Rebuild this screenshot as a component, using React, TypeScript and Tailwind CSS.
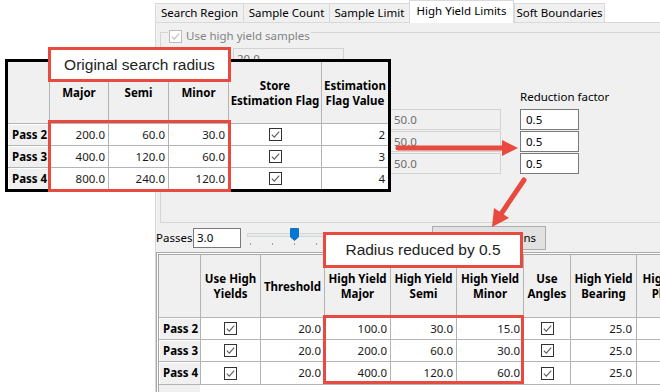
import { Fragment } from "react";

const RED = "#e84a3f";

function Check({ disabled }: { disabled?: boolean }) {
  const c = disabled ? "#bcbcbc" : "#333333";
  return (
    <svg width="13" height="13" viewBox="0 0 13 13" className="shrink-0">
      <rect x="0.5" y="0.5" width="12" height="12" fill="white" stroke={c} />
      <path d="M2.8 6.6 L5.3 9.1 L10.2 3.6" fill="none" stroke={disabled ? "#bcbcbc" : "#5a5a5a"} strokeWidth="1.1" />
    </svg>
  );
}

const tabs = [
  { label: "Search Region", w: "w-[88px]" },
  { label: "Sample Count", w: "w-[86px]" },
  { label: "Sample Limit", w: "w-[80px]" },
  { label: "High Yield Limits", w: "w-[105px]", active: true },
  { label: "Soft Boundaries", w: "w-[91px]" },
];

const passes = ["Pass 2", "Pass 3", "Pass 4"];

const hdr =
  "bg-[#f0f0f0] border-r border-b border-[#b4b4b4] flex items-center justify-center text-center font-bold leading-[15px] whitespace-nowrap overflow-hidden";
const rowHdr =
  "bg-[#f0f0f0] border-r border-b border-[#b4b4b4] flex items-center pl-[4px] font-bold shadow-[inset_1px_1px_0_#ffffff]";
const num = "bg-white border-r border-b border-[#b4b4b4] flex items-center justify-end pr-[3px] text-[#1a1a1a]";
const box = "bg-white border-r border-b border-[#b4b4b4] flex items-center justify-center";

function OriginalTable() {
  const rows = [
    ["200.0", "60.0", "30.0", "2"],
    ["400.0", "120.0", "60.0", "3"],
    ["800.0", "240.0", "120.0", "4"],
  ];
  return (
    <div className="absolute left-[5px] top-[59px] border-[3px] border-black bg-white">
      <div className="grid grid-cols-[42px_59px_60px_60px_93px_66px] grid-rows-[62px_22px_22px_21px]">
        <div className={hdr} />
        <div className={hdr}>Major</div>
        <div className={hdr}>Semi</div>
        <div className={hdr}>Minor</div>
        <div className={hdr}>
          Store
          <br />
          Estimation Flag
        </div>
        <div className={hdr + " border-r-0"}>
          Estimation
          <br />
          Flag Value
        </div>
        {rows.map((r, i) => (
          <Fragment key={i}>
            <div className={rowHdr + (i === 2 ? " border-b-0" : "")}>{passes[i]}</div>
            <div className={num + (i === 2 ? " border-b-0" : "")}>{r[0]}</div>
            <div className={num + (i === 2 ? " border-b-0" : "")}>{r[1]}</div>
            <div className={num + (i === 2 ? " border-b-0" : "")}>{r[2]}</div>
            <div className={box + (i === 2 ? " border-b-0" : "")}>
              <Check />
            </div>
            <div className={num + " border-r-0" + (i === 2 ? " border-b-0" : "")}>{r[3]}</div>
          </Fragment>
        ))}
      </div>
    </div>
  );
}

function HighYieldTable() {
  const rows = [
    ["100.0", "30.0", "15.0"],
    ["200.0", "60.0", "30.0"],
    ["400.0", "120.0", "60.0"],
  ];
  return (
    <div className="mt-[2px] flex-1 flex flex-col border-l border-t border-[#a8a8a8] pl-[1px] pt-[1px] bg-white">
      <div className="flex-1 flex flex-col border-l border-t border-[#a8a8a8]">
        <div className="grid w-max grid-cols-[42px_60px_64px_66px_66px_67px_47px_66px_70px] grid-rows-[63px_22px_22px_23px]">
          <div className={hdr} />
          <div className={hdr}>
            Use High
            <br />
            Yields
          </div>
          <div className={hdr}>Threshold</div>
          <div className={hdr}>
            High Yield
            <br />
            Major
          </div>
          <div className={hdr}>
            High Yield
            <br />
            Semi
          </div>
          <div className={hdr}>
            High Yield
            <br />
            Minor
          </div>
          <div className={hdr}>
            Use
            <br />
            Angles
          </div>
          <div className={hdr}>
            High Yield
            <br />
            Bearing
          </div>
          <div className={hdr}>
            High Yield
            <br />
            Plunge
          </div>
          {rows.map((r, i) => (
            <Fragment key={i}>
              <div className={rowHdr}>{passes[i]}</div>
              <div className={box}>
                <Check />
              </div>
              <div className={num}>20.0</div>
              <div className={num}>{r[0]}</div>
              <div className={num}>{r[1]}</div>
              <div className={num}>{r[2]}</div>
              <div className={box}>
                <Check />
              </div>
              <div className={num + " pr-[4px]"}>25.0</div>
              <div className={num}>0.0</div>
            </Fragment>
          ))}
        </div>
        <div className="flex-1 w-[41px] bg-[#f0f0f0]" />
      </div>
    </div>
  );
}

export default function App() {
  return (
    <div className="relative w-[660px] h-[392px] overflow-hidden bg-white flex font-['Noto_Sans',sans-serif] text-[11.5px] text-black">
      <div className="w-[155px] shrink-0" />
      <div className="flex-1 min-w-0 flex flex-col">
        {/* tab strip */}
        <div className="h-[22px] flex items-end">
          {tabs.map((t) => (
            <div
              key={t.label}
              className={
                t.active
                  ? `${t.w} h-[23px] -mb-px relative z-10 bg-white border-l border-r border-t border-[#d9d9d9] flex items-center justify-center pb-[2px] whitespace-nowrap`
                  : `${t.w} h-[19px] bg-[#f0f0f0] border-l border-t border-[#d9d9d9] flex items-center justify-center whitespace-nowrap last:border-r`
              }
            >
              {t.label}
            </div>
          ))}
        </div>

        {/* tab page */}
        <div className="flex-1 flex flex-col bg-[#f0f0f0] border-l border-t border-[#d9d9d9] min-h-0">
          <div className="ml-[4px] -mr-[10px] mt-[9px] h-[191px] border border-[#d5d5d5] flex flex-col shrink-0">
            <div className="-mt-[4px] ml-[7px] h-[14px] w-fit px-[1px] bg-[#f0f0f0] flex items-center gap-[4px] text-[#838383]">
              <Check disabled />
              <span>Use high yield samples</span>
            </div>
            <div className="mt-[5px] ml-[72px] w-[111px] h-[21px] border border-[#d3d3d3] bg-[#f0f0f0] text-[#6d6d6d] flex items-center pl-[3px]">
              20.0
            </div>
            <div className="mt-[20px] flex">
              <div className="ml-[229px] w-[111px] pt-[20px] flex flex-col gap-[1px]">
                {[0, 1, 2].map((i) => (
                  <div
                    key={i}
                    className="h-[21px] border border-[#d3d3d3] bg-[#f0f0f0] text-[#6d6d6d] flex items-center pl-[3px]"
                  >
                    50.0
                  </div>
                ))}
              </div>
              <div className="ml-[19px] w-[59px] flex flex-col">
                <div className="h-[16px] leading-[16px] whitespace-nowrap">Reduction factor</div>
                <div className="mt-[4px] flex flex-col gap-[1px]">
                  {[0, 1, 2].map((i) => (
                    <div
                      key={i}
                      className="h-[21px] border border-[#7a7a7a] bg-white flex items-center pl-[5px]"
                    >
                      0.5
                    </div>
                  ))}
                </div>
              </div>
            </div>
          </div>

          {/* passes row */}
          <div className="mt-[2px] h-[25px] flex items-center shrink-0">
            <span className="w-[37px]">Passes</span>
            <div className="w-[48px] h-[20px] border border-[#7a7a7a] bg-white flex items-center pl-[3px]">3.0</div>
            <div className="relative ml-[6px] w-[180px] h-[25px]">
              <div className="absolute left-0 right-0 top-[8px] h-[4px] bg-[#e7eaea] border border-[#d6d6d6]" />
              <div className="absolute left-[3px] top-[18px] flex gap-[21px]">
                {Array.from({ length: 8 }).map((_, i) => (
                  <div key={i} className="w-px h-[2px] bg-[#a0a0a0]" />
                ))}
              </div>
              <svg className="absolute left-[43px] top-[3px]" width="9" height="13" viewBox="0 0 9 13">
                <path d="M0.5 0.5 H8.5 V9 L4.5 12.5 L0.5 9 Z" fill="#0078d7" stroke="#0060b0" strokeWidth="0.8" />
              </svg>
            </div>
            <div className="ml-[5px] w-[114px] h-[24px] border border-[#adadad] bg-[#e1e1e1] flex items-center justify-end pr-[9px] whitespace-nowrap">
              Passes Options
            </div>
          </div>

          <HighYieldTable />
        </div>
      </div>

      {/* annotations */}
      <OriginalTable />
      <div className="absolute left-[48px] top-[120px] w-[183px] h-[72px] border-[3px] border-[#e84a3f]" />
      <div className="absolute left-[323px] top-[315px] w-[201px] h-[69px] border-[3px] border-[#e84a3f]" />
      <div className="absolute left-[48px] top-[47px] w-[183px] h-[35px] border-[3px] border-[#e84a3f] bg-white flex items-center justify-center font-['Liberation_Sans',Arial,sans-serif] text-[15.5px] text-[#222222]">
        Original search radius
      </div>
      <div className="absolute left-[323px] top-[232px] w-[200px] h-[36px] border-[3px] border-[#e84a3f] bg-white flex items-center justify-center font-['Liberation_Sans',Arial,sans-serif] text-[15.5px] text-[#222222]">
        Radius reduced by 0.5
      </div>
      <svg className="absolute inset-0 pointer-events-none" width="660" height="392">
        <line x1="398" y1="148" x2="505" y2="148" stroke={RED} strokeWidth="5" strokeLinecap="round" />
        <polygon points="502,140 518,148 502,156" fill={RED} />
        <line x1="524" y1="180" x2="501" y2="214" stroke={RED} strokeWidth="5" strokeLinecap="round" />
        <polygon points="494,208 509,218 492,227" fill={RED} />
      </svg>
    </div>
  );
}
